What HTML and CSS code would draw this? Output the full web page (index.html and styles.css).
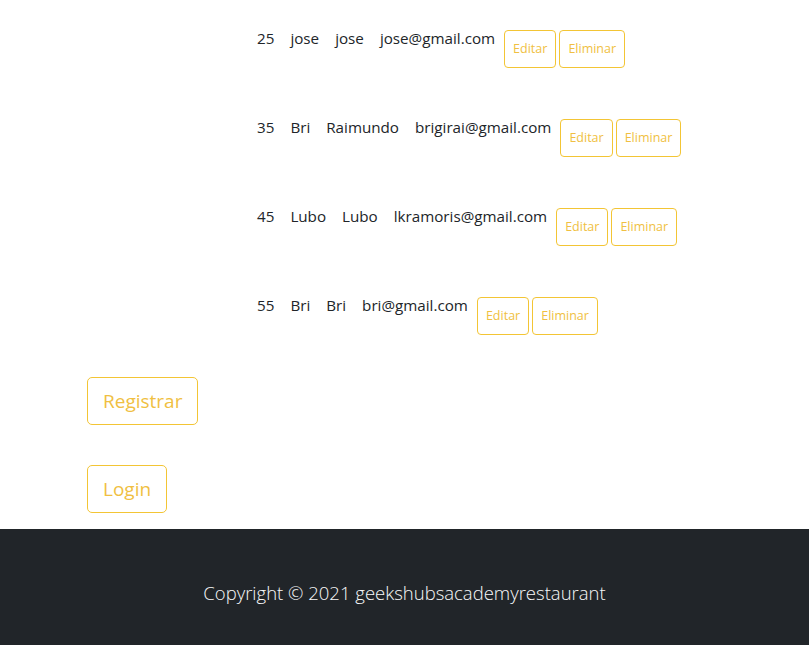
FILE: index.html
```html
<!DOCTYPE html>
<html lang="es">
<head>
<meta charset="utf-8">
<title>Usuarios</title>
<link rel="stylesheet" href="styles.css">
</head>
<body>
<main class="page">
  <ul class="users">
    <li class="user">
      <span class="field">25</span><span class="field">jose</span><span class="field">jose</span><span class="field">jose@gmail.com</span>
      <div class="actions"><button class="btn">Editar</button><button class="btn">Eliminar</button></div>
    </li>
    <li class="user">
      <span class="field">35</span><span class="field">Bri</span><span class="field">Raimundo</span><span class="field">brigirai@gmail.com</span>
      <div class="actions"><button class="btn">Editar</button><button class="btn">Eliminar</button></div>
    </li>
    <li class="user">
      <span class="field">45</span><span class="field">Lubo</span><span class="field">Lubo</span><span class="field">lkramoris@gmail.com</span>
      <div class="actions"><button class="btn">Editar</button><button class="btn">Eliminar</button></div>
    </li>
    <li class="user">
      <span class="field">55</span><span class="field">Bri</span><span class="field">Bri</span><span class="field">bri@gmail.com</span>
      <div class="actions"><button class="btn">Editar</button><button class="btn">Eliminar</button></div>
    </li>
  </ul>
  <div class="auth">
    <button class="btn btn-lg">Registrar</button>
    <button class="btn btn-lg">Login</button>
  </div>
</main>
<footer class="footer">
  <p>Copyright © 2021 geekshubsacademyrestaurant</p>
</footer>
</body>
</html>
```

FILE: styles.css
```css
* { box-sizing: border-box; }
html, body { margin: 0; padding: 0; }
body {
  font-family: "Open Sans", "Noto Sans", sans-serif;
  font-size: 15.2px;
  color: #212529;
  background: #fff;
}
.page {
  padding: 26px 0 16px 87px;
}
.users {
  list-style: none;
  margin: 0 0 0 170px;
  padding: 0;
  display: flex;
  flex-direction: column;
  gap: 47px;
}
.user {
  display: flex;
  align-items: flex-start;
  line-height: 24px;
}
.field { margin-right: 16px; }
.field:nth-child(4) { margin-right: 9px; }
.actions {
  display: flex;
  gap: 3px;
  margin-top: 4px;
}
.btn {
  font-family: inherit;
  font-size: 12.5px;
  line-height: 20px;
  padding: 8px 8px;
  height: 38px;
  color: #f0bf42;
  background: transparent;
  border: 1px solid #f3c535;
  border-radius: 4px;
}
.auth {
  margin-top: 42px;
  display: flex;
  flex-direction: column;
  align-items: flex-start;
  gap: 40px;
}
.btn-lg {
  font-size: 19px;
  line-height: 30px;
  height: 48px;
  padding: 8px 15px;
  border-radius: 5px;
}
.footer {
  background: #212529;
  color: #f8f9fa;
  text-align: center;
  padding: 49px 0 40px;
}
.footer p {
  margin: 0;
  font-size: 18.5px;
  font-weight: 300;
  line-height: 30px;
}
```
